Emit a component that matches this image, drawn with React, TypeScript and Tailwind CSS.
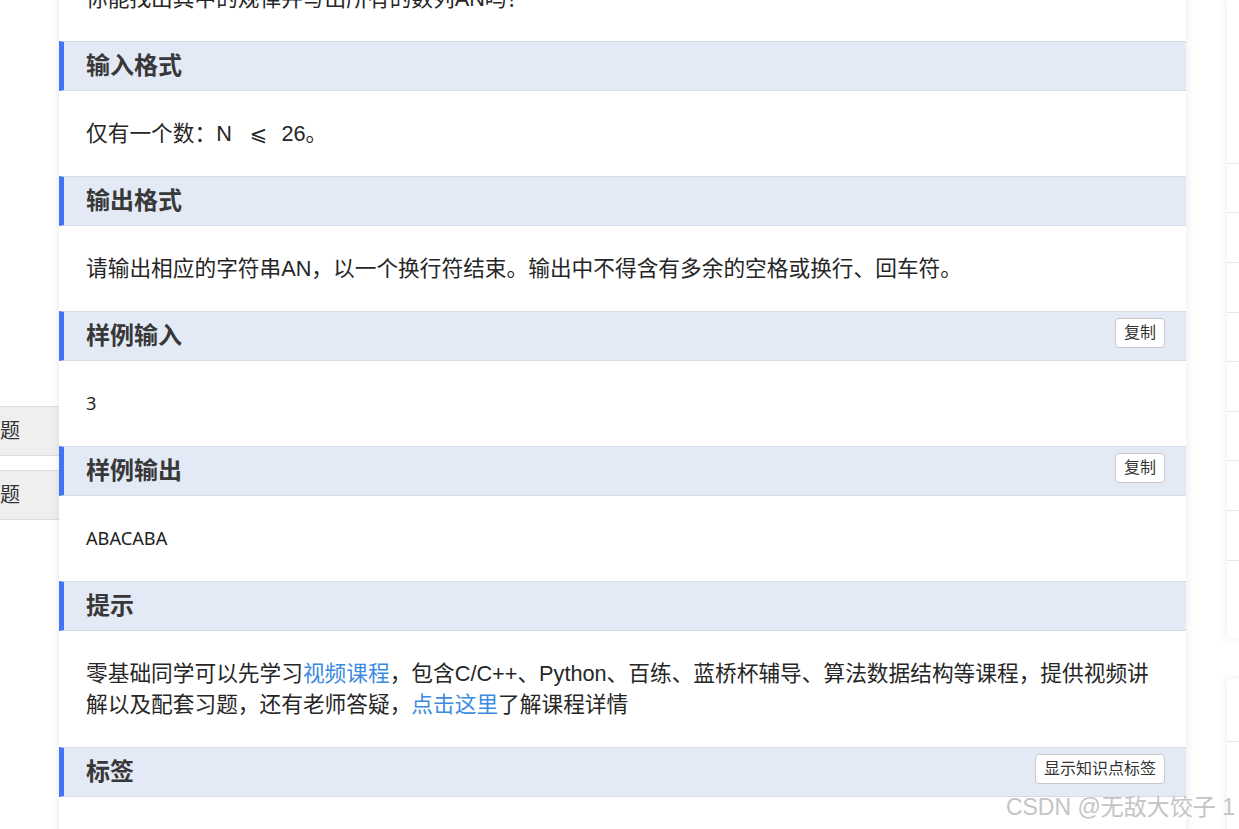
import type { ReactNode } from "react";

function SectionHeader({ title, action }: { title: string; action?: string }) {
  return (
    <div className="flex h-[50px] items-center justify-between border-y border-l-[5px] border-y-[#d6dce6] border-l-[#3f74f7] bg-[#e3eaf6] pl-[22px] pr-[21px]">
      <h3 className="text-[24px] font-bold text-[#383838]">{title}</h3>
      {action && (
        <button className="mb-[7px] h-[30px] rounded-[4px] border border-[#c8c8c8] bg-white px-2 text-[16px] leading-none text-[#333]">
          {action}
        </button>
      )}
    </div>
  );
}

function SectionBody({ children, mono }: { children: ReactNode; mono?: boolean }) {
  return (
    <div
      className={
        mono
          ? "h-[85px] px-[27px] py-[27px] font-['Noto_Sans',sans-serif] text-[18.2px] leading-[31px] text-[#222]"
          : "px-[27px] py-[27px] text-[21.7px] leading-[31px] text-[#262626]"
      }
    >
      {children}
    </div>
  );
}

export default function App() {
  return (
    <div className="relative h-[829px] w-[1239px] overflow-hidden bg-white font-['Liberation_Sans','Noto_Sans_CJK_SC',sans-serif]">
      <div className="flex">
        {/* left tabs */}
        <div className="w-[59px] shrink-0 pt-[406px]">
          <div className="flex h-[50px] items-center overflow-hidden border-y border-[#dedede] bg-[#efefef] text-[20px] text-[#333]">
            <span className="-ml-[20px] whitespace-nowrap">试题</span>
          </div>
          <div className="mt-[14px] flex h-[50px] items-center overflow-hidden border-y border-[#dedede] bg-[#efefef] text-[20px] text-[#333]">
            <span className="-ml-[20px] whitespace-nowrap">试题</span>
          </div>
        </div>

        {/* problem card */}
        <div className="-mt-[44px] h-[900px] w-[1127px] shrink-0 bg-white shadow-[0_0_10px_rgba(0,0,0,0.09)]">
          <SectionBody>你能找出其中的规律并写出所有的数列AN吗？</SectionBody>

          <SectionHeader title="输入格式" />
          <div className="h-[85px] px-[27px] py-[27px] text-[21.7px] leading-[31px] text-[#262626]">
            仅有一个数：N
            <span className="ml-[18px] mr-[14px] font-['DejaVu_Sans',sans-serif] text-[21px] leading-none">⩽</span>
            26。
          </div>

          <SectionHeader title="输出格式" />
          <SectionBody>请输出相应的字符串AN，以一个换行符结束。输出中不得含有多余的空格或换行、回车符。</SectionBody>

          <SectionHeader title="样例输入" action="复制" />
          <SectionBody mono>3</SectionBody>

          <SectionHeader title="样例输出" action="复制" />
          <SectionBody mono>ABACABA</SectionBody>

          <SectionHeader title="提示" />
          <SectionBody>
            零基础同学可以先学习<a className="text-[#3b8be0]">视频课程</a>，包含C/C++、Python、百练、蓝桥杯辅导、算法数据结构等课程，提供视频讲
            <br />
            解以及配套习题，还有老师答疑，<a className="text-[#3b8be0]">点击这里</a>了解课程详情
          </SectionBody>

          <SectionHeader title="标签" action="显示知识点标签" />
        </div>

        {/* right sidebar */}
        <div className="ml-[41px] flex flex-1 flex-col">
          <div className="h-[638px] bg-white shadow-[0_0_10px_rgba(0,0,0,0.09)]">
            <div className="h-[164px] border-b border-[#e6e6e6]" />
            <div className="h-[49px] border-b border-[#e6e6e6]" />
            <div className="h-[50px] border-b border-[#e6e6e6]" />
            <div className="h-[50px] border-b border-[#e6e6e6]" />
            <div className="h-[49px] border-b border-[#e6e6e6]" />
            <div className="h-[50px] border-b border-[#e6e6e6]" />
            <div className="h-[49px] border-b border-[#e6e6e6]" />
            <div className="h-[50px] border-b border-[#e6e6e6]" />
            <div className="h-[50px] border-b border-[#e6e6e6]" />
          </div>
          <div className="mt-[41px] h-[200px] bg-white shadow-[0_0_10px_rgba(0,0,0,0.09)]">
            <div className="h-[63px] border-b border-[#e6e6e6]" />
          </div>
        </div>
      </div>

      {/* watermark */}
      <div className="pointer-events-none absolute bottom-[5px] right-[4px] whitespace-nowrap text-[23px] text-[#c4c4c4] [text-shadow:0_0_2px_#fff]">
        CSDN @无敌大饺子 1
      </div>
    </div>
  );
}
